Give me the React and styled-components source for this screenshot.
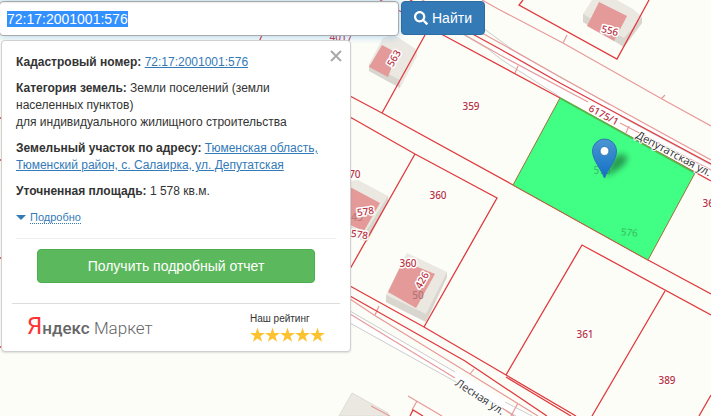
import React, { useEffect, useRef } from "react";
import styled, { createGlobalStyle } from "styled-components";
import { FaSearch } from "react-icons/fa";

const GlobalStyle = createGlobalStyle`
  * {
    box-sizing: border-box;
  }

  body {
    margin: 0;
    color: #333;
    background: #fcfdf7;
    font: 12px/17px "Liberation Sans", Arial, sans-serif;
  }
`;

const Page = styled.main`
  position: relative;
  min-height: 100vh;
  overflow: hidden;
`;

const MapCanvas = styled.svg`
  position: absolute;
  top: 0;
  left: 0;
  width: 100%;
  height: 100%;
  fill: none;
`;

const ParcelLabel = styled.text`
  fill: #b8323f;
  stroke: #fff;
  stroke-width: 3px;
  stroke-linejoin: round;
  paint-order: stroke;
  font: 500 10px/1 "Noto Sans", "Open Sans", sans-serif;
  text-anchor: middle;
`;

const FaintLabel = styled(ParcelLabel)`
  fill: ${props => props.$color};
  stroke: none;
`;

const StreetLabel = styled(ParcelLabel)`
  fill: #333;
  stroke-width: 2px;
  font: 11px/1 "Open Sans", "Noto Sans", sans-serif;
`;

const Overlay = styled.div`
  position: relative;
  display: flex;
  flex-direction: column;
  align-items: flex-start;
  gap: 4px;
  padding-top: 1px;
`;

const SearchForm = styled.form`
  display: flex;
  gap: 2px;
  width: 100%;
  margin-left: -1px;
`;

const SearchInput = styled.input`
  flex: 0 1 400px;
  min-width: 0;
  height: 35px;
  padding: 0 7px;
  border: 1px solid #aaa;
  border-radius: 4px;
  outline: 0;
  color: #555;
  background: #fff;
  box-shadow: inset 0 1px 1px rgba(0, 0, 0, 0.08), 0 0 8px rgba(102, 175, 233, 0.6);
  font: 14px/20px "Liberation Sans", Arial, sans-serif;

  &::selection {
    color: #fff;
    background: #3390ff;
  }
`;

const SearchButton = styled.button`
  display: flex;
  align-items: center;
  gap: 4px;
  height: 34px;
  padding: 0 12px;
  border: 1px solid #2e6da4;
  border-radius: 4px;
  color: #fff;
  background: #337ab7;
  font: 14px/20px "Liberation Sans", Arial, sans-serif;
`;

const Panel = styled.section`
  width: 350px;
  max-width: 100%;
  margin-left: 1px;
  padding: 9px 10px 8px;
  border: 1px solid #d0d0d0;
  border-radius: 4px;
  background: #fff;
  box-shadow: 0 1px 2px rgba(0, 0, 0, 0.12);
`;

const PanelBody = styled.div`
  display: flex;
  align-items: flex-start;
  margin: 0 4px;
  padding-bottom: 12px;
  border-bottom: 1px solid #eee;
`;

const Details = styled.div`
  display: flex;
  flex: 1;
  flex-direction: column;
  align-items: flex-start;
  gap: 9px;
  padding-top: 4px;

  p {
    margin: 0;
  }

  a {
    color: #337ab7;
  }
`;

const CloseButton = styled.button`
  display: flex;
  margin-right: -6px;
  padding: 0;
  border: 0;
  background: none;
`;

const MoreButton = styled.button`
  display: flex;
  align-items: center;
  gap: 4px;
  height: 17px;
  padding: 0;
  border: 0;
  color: #337ab7;
  background: none;
  font: 11px/12px "Liberation Sans", Arial, sans-serif;

  &:before {
    content: "";
    border: 5px solid transparent;
    border-top-color: #337ab7;
    border-bottom: 0;
  }

  span {
    border-bottom: 1px dotted #337ab7;
  }
`;

const ReportButton = styled.button`
  display: block;
  width: calc(100% - 50px);
  height: 34px;
  margin: 10px 25px 20px;
  border: 1px solid #4cae4c;
  border-radius: 4px;
  color: #fff;
  background: #5cb85c;
  font: 14px/20px "Liberation Sans", Arial, sans-serif;
`;

const MarketRow = styled.footer`
  display: flex;
  justify-content: space-between;
  height: 40px;
  padding: 6px 15px 0;
  border-top: 1px solid #ddd;
`;

const MarketLogo = styled.div`
  color: #666;
  font: 300 17px/32px Roboto, "Open Sans", sans-serif;

  b {
    font-weight: 500;
  }
`;

const MarketInitial = styled.span`
  color: #f33;
  font-size: 24px;
  font-weight: 400;
`;

const Rating = styled.div`
  color: #333;
  font: 10px/17px "Liberation Sans", Arial, sans-serif;
`;

const Stars = styled.div`
  display: flex;
  fill: #fdc22f;
`;

const lightLines = [
  "M482 0L500 10L563 43L662 99L711 126M567 35L563 43M665 95L661 99",
  "M422 0L500 43L560 77L711 160M465 35L500 55L588 102M620 123L711 170",
  "M518 66L515 73M629 126L626 133",
  "M350 299L374 315L470 374L538 416M379 306L375 315M474 369L470 374M518 403L511 416",
  "M350 314L455 378M502 408L514 416M371 406L390 416M408 396L442 416M417 401L412 410",
];

const redLines = [
  "M380 0L443 35L560 98L711 181M410 0L500 49L560 83L711 164",
  "M425 35L382 113M350 96L382 113L513 185L648 260L711 294",
  "M350 117L415 154L497 198L424 327M415 154L350 269",
  "M350 286L424 327L506 375L576 416M506 377L571 416M350 296L465 361L547 416",
  "M506 375L582 245L711 315M665 291L592 416M711 395L699 416",
  "M523 0L519 5L617 59L649 0M423 416L413 410L410 416",
  "M0 118h2M0 160h2M0 258h2M0 347h2M262 35L259 42",
];

const greyLines = [
  "M483 28L513 50L610 105M464 35L488 49L502 60L560 97M620 116L711 165",
  "M350 311L455 372M505 402L532 416M350 323L483 397L516 416",
];

const buildings = [
  {
    base: "383,38 393,34 417,50 417,56 400,88 369,71 369,64",
    side: "369,64 400,80 400,88 369,71",
    roof: "382,45 397,53 388,77 369,67",
  },
  {
    base: "592,0 617,0 633,9 642,17 642,23 624,47 583,22 583,14",
    side: "583,14 624,38 642,17 642,23 624,47 583,22",
    roof: "599,2 627,16 614,41 587,26",
  },
  {
    base: "407,253 447,272 447,277 426,322 386,302 386,295",
    side: "386,295 426,314 447,272 447,277 426,322 386,302",
    roof: "403,261 435,274 416,308 388,292",
  },
  {
    base: "350,181 358,180 388,196 388,202 367,242 350,235",
    side: "365,233 388,196 388,202 367,242 350,235 350,226",
    roof: "350,187 380,203 364,231 350,225",
  },
];

const labels = [
  { x: 471, y: 110, text: "359" },
  { x: 438, y: 199, text: "360" },
  { x: 352, y: 178, text: "370" },
  { x: 366, y: 215, text: "578", angle: -8 },
  { x: 359, y: 238, text: "578", angle: 8 },
  { x: 408, y: 267, text: "360" },
  { x: 425, y: 282, text: "426", angle: -60 },
  { x: 397, y: 60, text: "563", angle: -60 },
  { x: 609, y: 34, text: "556", angle: 14 },
  { x: 602, y: 118, text: "6175/1", angle: 28 },
  { x: 341, y: 41, text: "4017" },
  { x: 711, y: 207, text: "362" },
  { x: 585, y: 338, text: "361" },
  { x: 667, y: 384, text: "389" },
];

const rotate = ({ x, y, angle = 0 }) => `rotate(${angle} ${x} ${y})`;

const CadastralMap = () => (
  <MapCanvas aria-hidden="true">
    <defs>
      <linearGradient id="pin" x1="0" y1="0" x2="0" y2="1">
        <stop offset="0" stopColor="#4a97d2" />
        <stop offset="1" stopColor="#126fc6" />
      </linearGradient>
      <filter id="soft" x="-50%" y="-50%" width="200%" height="200%">
        <feGaussianBlur stdDeviation="3" />
      </filter>
    </defs>

    <path d="M488 49L513 50L711 162V181L560 98ZM350 311L532 416H516L350 323Z" fill="#fff" />
    {greyLines.map(d => (
      <path key={d} d={d} stroke="#ccc" />
    ))}
    <polygon points="352,393 388,413 388,416 339,416" fill="#ebe8e2" stroke="#dedbd5" />
    {buildings.map(({ base, side, roof }) => (
      <g key={roof}>
        <polygon points={base} fill="#ebe8e2" />
        <polygon points={side} fill="#d9d5cf" />
        <polygon points={roof} fill="#e39a98" />
      </g>
    ))}
    {lightLines.map(d => (
      <path key={d} d={d} stroke="#e79a9a" strokeWidth="1.2" />
    ))}
    {redLines.map(d => (
      <path key={d} d={d} stroke="#e03a3e" strokeWidth="1.3" />
    ))}

    <FaintLabel x="418" y="299" $color="#b07575">50</FaintLabel>
    <FaintLabel x="357" y="221" $color="#c07777">45</FaintLabel>
    {labels.map(label => (
      <ParcelLabel key={`${label.x}-${label.y}`} x={label.x} y={label.y} transform={rotate(label)}>
        {label.text}
      </ParcelLabel>
    ))}

    <polygon points="560,98 695,173 648,260 513,185" fill="#41ff85" stroke="#a0703c" />
    <path d="M560 98L695 173" stroke="#55b84c" strokeWidth="2" />
    <FaintLabel x="629" y="236" transform="rotate(5 629 236)" $color="#38c566">576</FaintLabel>
    <FaintLabel x="602" y="174" $color="#38c566">576</FaintLabel>

    <StreetLabel x="672" y="157" transform="rotate(28 672 157)">Депутатская ул.</StreetLabel>
    <StreetLabel x="478" y="400" transform="rotate(33 478 400)">Лесная ул.</StreetLabel>

    <path d="M605 177L612 160Q622 150 627 157Q629 165 605 177Z" fill="#000" opacity="0.4" filter="url(#soft)" />
    <path
      d="M604.500 178C601 169 592.500 160 592.500 151A12 12 0 0 1 616.500 151C616.500 160 608 169 604.500 178Z"
      fill="url(#pin)"
      stroke="#2e75b0"
    />
    <circle cx="604.500" cy="151" r="4.500" fill="#fff" stroke="#2e75b0" />
  </MapCanvas>
);

const Star = () => (
  <svg width="15" height="16" viewBox="0 0 16 16">
    <path d="M8 0L9.900 5.800H16L11.100 9.400L12.900 15.200L8 11.700L3.100 15.200L4.900 9.400L0 5.800H6.100Z" />
  </svg>
);

const App = () => {
  const inputRef = useRef(null);

  useEffect(() => {
    inputRef.current.focus();
    inputRef.current.select();
  }, []);

  return (
    <Page>
      <GlobalStyle />
      <CadastralMap />
      <Overlay>
        <SearchForm onSubmit={event => event.preventDefault()}>
          <SearchInput ref={inputRef} aria-label="Кадастровый номер" defaultValue="72:17:2001001:576" />
          <SearchButton type="submit">
            <FaSearch />
            Найти
          </SearchButton>
        </SearchForm>

        <Panel>
          <PanelBody>
            <Details>
              <p>
                <b>Кадастровый номер:</b> <a href="#parcel">72:17:2001001:576</a>
              </p>
              <p>
                <b>Категория земель:</b> Земли поселений (земли населенных пунктов)
                <br />
                для индивидуального жилищного строительства
              </p>
              <p>
                <b>Земельный участок по адресу:</b>{" "}
                <a href="#address">Тюменская область, Тюменский район, с. Салаирка, ул. Депутатская</a>
              </p>
              <p>
                <b>Уточненная площадь:</b> 1 578 кв.м.
              </p>
              <MoreButton type="button">
                <span>Подробно</span>
              </MoreButton>
            </Details>
            <CloseButton type="button" aria-label="Закрыть">
              <svg width="12" height="12" viewBox="0 0 12 12" stroke="#aaa" strokeWidth="2">
                <path d="M1 1L11 11M11 1L1 11" />
              </svg>
            </CloseButton>
          </PanelBody>

          <ReportButton type="button">Получить подробный отчет</ReportButton>

          <MarketRow>
            <MarketLogo>
              <b>
                <MarketInitial>Я</MarketInitial>ндекс
              </b>{" "}
              Маркет
            </MarketLogo>
            <Rating>
              Наш рейтинг
              <Stars>
                {[1, 2, 3, 4, 5].map(star => (
                  <Star key={star} />
                ))}
              </Stars>
            </Rating>
          </MarketRow>
        </Panel>
      </Overlay>
    </Page>
  );
};

export default App;
